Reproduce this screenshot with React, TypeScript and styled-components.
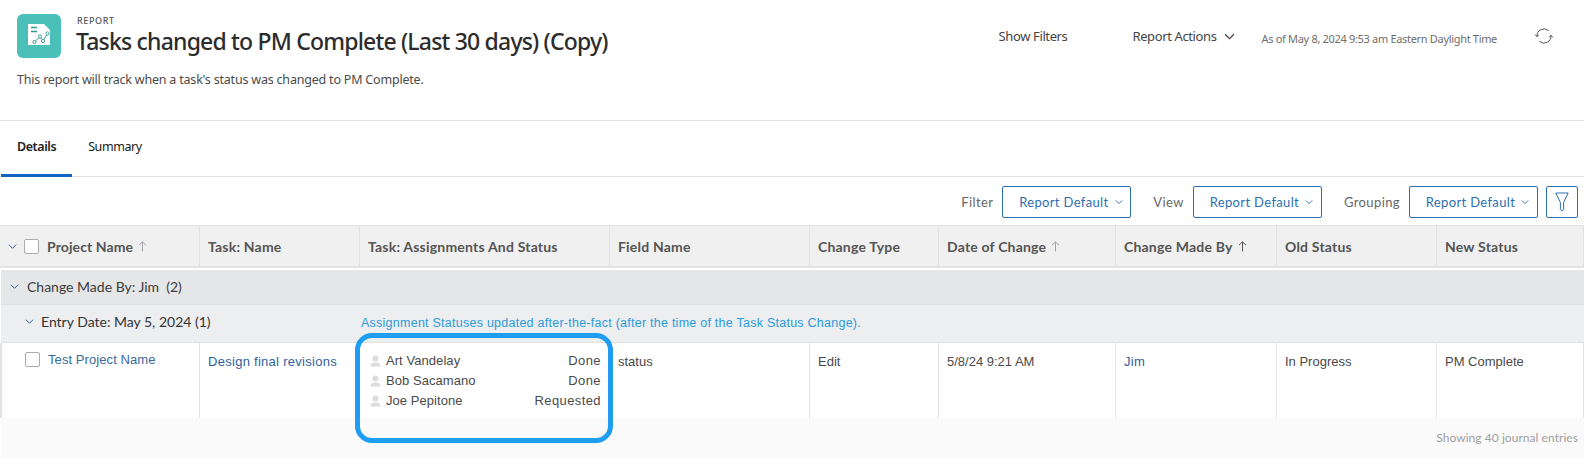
import React, { FC } from 'react';
import styled, { createGlobalStyle } from 'styled-components';

const COLUMNS = '200px 160px 250px 200px 129px 177px 161px 160px 1fr';

const GlobalStyle = createGlobalStyle`
  html, body {
    margin: 0;
    padding: 0;
    background: #fff;
  }
  body {
    font-family: 'Lato', 'Liberation Sans', sans-serif;
    color: #454545;
  }
`;

const Chevron: FC<{ size?: number; color?: string }> = ({ size = 9, color = '#2c5fa8' }) => (
  <svg width={size} height={size} viewBox="0 0 10 10" fill="none" stroke={color} strokeWidth="1.1">
    <path d="M1 3l4 4 4-4" />
  </svg>
);

const Arrow: FC<{ dark?: boolean }> = ({ dark }) => (
  <svg width="9" height="11" viewBox="0 0 9 11" fill="none" stroke={dark ? '#555' : '#a5a5a5'} strokeWidth="1">
    <path d="M4.5 10.5V1M1 4.2l3.5-3.4L8 4.2" />
  </svg>
);

const Person: FC = () => (
  <svg width="11" height="12" viewBox="0 0 11 12" fill="#dcdcdc">
    <circle cx="5.5" cy="3.4" r="3" />
    <path d="M0.5 11.5c0-2.6 1.6-4 5-4s5 1.4 5 4z" />
  </svg>
);

const ReportIcon: FC = () => (
  <svg width="44" height="44" viewBox="0 0 44 44">
    <path d="M11 10h16l6 6v15H11z" fill="#fff" />
    <path d="M14 13.5h6M14 17.5h6" stroke="#2f9d95" strokeWidth="1.4" />
    <g fill="none" stroke="#2f8f88" strokeWidth="0.9">
      <circle cx="17.5" cy="28" r="1.6" />
      <circle cx="23" cy="22.5" r="1.6" />
      <circle cx="26" cy="27" r="1.6" />
      <circle cx="30.5" cy="19.5" r="1.6" />
      <path d="M18.6 26.8l3.3-3.2M23.8 24l1.4 1.6M26.9 25.6l2.8-4.7" />
    </g>
  </svg>
);

const RefreshIcon: FC = () => (
  <svg width="20" height="20" viewBox="0 0 20 20" fill="none" stroke="#555" strokeWidth="1">
    <path d="M3 10.5A7 7 0 0 1 14.5 4.6" />
    <path d="M17 9.5A7 7 0 0 1 5.5 15.4" />
    <path d="M1.2 8.6L3 10.8l1.8-2.2M15.2 11.4L17 9.2l1.8 2.2" />
  </svg>
);

const FunnelIcon: FC = () => (
  <svg width="14" height="20" viewBox="0 0 14 20" fill="none" stroke="#2c6fb3" strokeWidth="1">
    <path d="M0.8 1h12.4L8.6 10.5v7.2c0 1-3.2 1-3.2 0v-7.2z" />
  </svg>
);

const assignments = [
  { name: 'Art Vandelay', status: 'Done' },
  { name: 'Bob Sacamano', status: 'Done' },
  { name: 'Joe Pepitone', status: 'Requested' },
];

const filters = ['Filter', 'View', 'Grouping'];

const App: FC = () => (
  <Page>
    <GlobalStyle />
    <Header>
      <TitleRow>
        <Logo>
          <ReportIcon />
        </Logo>
        <TitleBlock>
          <Eyebrow>REPORT</Eyebrow>
          <Title>Tasks changed to PM Complete (Last 30 days) (Copy)</Title>
        </TitleBlock>
        <Actions>
          <ActionLink>Show Filters</ActionLink>
          <ActionMenu>
            Report Actions <Chevron size={11} color="#444" />
          </ActionMenu>
          <AsOf>As of May 8, 2024 9:53 am Eastern Daylight Time</AsOf>
          <RefreshIcon />
        </Actions>
      </TitleRow>
      <Description>This report will track when a task's status was changed to PM Complete.</Description>
    </Header>

    <Tabs>
      <Tab $active>Details</Tab>
      <Tab>Summary</Tab>
    </Tabs>

    <Toolbar>
      {filters.map((label) => (
        <FilterGroup key={label}>
          <FilterLabel>{label}</FilterLabel>
          <SelectButton>
            Report Default <Chevron size={8} />
          </SelectButton>
        </FilterGroup>
      ))}
      <FunnelButton>
        <FunnelIcon />
      </FunnelButton>
    </Toolbar>

    <HeadRow>
      <HeadCell>
        <Chevron />
        <Checkbox />
        <ProjectHeading>Project Name</ProjectHeading> <Arrow />
      </HeadCell>
      <HeadCell>Task: Name</HeadCell>
      <HeadCell>Task: Assignments And Status</HeadCell>
      <HeadCell>Field Name</HeadCell>
      <HeadCell>Change Type</HeadCell>
      <HeadCell>
        Date of Change <Arrow />
      </HeadCell>
      <HeadCell>
        Change Made By <Arrow dark />
      </HeadCell>
      <HeadCell>Old Status</HeadCell>
      <HeadCell>New Status</HeadCell>
    </HeadRow>

    <GroupRow>
      <Chevron />
      <span>Change Made By: Jim&nbsp;&nbsp;(2)</span>
    </GroupRow>
    <SubGroupRow>
      <SubGroupLabel>
        <Chevron />
        <span>Entry Date: May 5, 2024 (1)</span>
      </SubGroupLabel>
      <Note>Assignment Statuses updated after-the-fact (after the time of the Task Status Change).</Note>
    </SubGroupRow>

    <DataRow>
      <DataCell>
        <ProjectCell>
          <Checkbox />
          <ProjectLink>Test Project Name</ProjectLink>
        </ProjectCell>
      </DataCell>
      <DataCell>
        <LinkText>Design final revisions</LinkText>
      </DataCell>
      <DataCell>
        <Assignments>
          {assignments.map((a) => (
            <Assignment key={a.name}>
              <Person />
              <AssigneeName>{a.name}</AssigneeName>
              <AssignmentStatus>{a.status}</AssignmentStatus>
            </Assignment>
          ))}
        </Assignments>
      </DataCell>
      <DataCell>status</DataCell>
      <DataCell>Edit</DataCell>
      <DataCell>5/8/24 9:21 AM</DataCell>
      <DataCell>
        <LinkText>Jim</LinkText>
      </DataCell>
      <DataCell>In Progress</DataCell>
      <DataCell>PM Complete</DataCell>
    </DataRow>

    <Footer>Showing 40 journal entries</Footer>
    <Callout />
  </Page>
);

export default App;

const Page = styled.div`
  position: relative;
  width: 1584px;
  height: 460px;
  overflow: hidden;
  background: #fff;
`;

const Header = styled.header`
  height: 121px;
  box-sizing: border-box;
  padding: 14px 30px 0 17px;
  border-bottom: 1px solid #e1e1e1;
  font-family: 'Noto Sans', sans-serif;
`;

const TitleRow = styled.div`
  display: flex;
  align-items: flex-start;
`;

const Logo = styled.div`
  width: 44px;
  height: 44px;
  border-radius: 6px;
  background: #4bc0b8;
  display: flex;
  align-items: center;
  justify-content: center;
`;

const TitleBlock = styled.div`
  margin: 1px 0 0 16px;
  flex: 1;
`;

const Eyebrow = styled.div`
  font-size: 9px;
  font-weight: 500;
  letter-spacing: 0.6px;
  line-height: 12px;
  color: #555;
`;

const Title = styled.h1`
  margin: -1px 0 0 -1px;
  font-size: 23px;
  font-weight: 500;
  line-height: 30px;
  letter-spacing: -0.81px;
  color: #2c2c2c;
`;

const Actions = styled.div`
  display: flex;
  align-items: center;
  height: 40px;
  margin-top: 2px;
  color: #444;
  font-size: 13px;
  letter-spacing: -0.38px;
`;

const ActionLink = styled.span`
  margin-right: 65px;
`;

const ActionMenu = styled.span`
  display: flex;
  align-items: center;
  gap: 7px;
  margin-right: 27px;
`;

const AsOf = styled.span`
  font-size: 11px;
  color: #6e6e6e;
  letter-spacing: -0.32px;
  margin: 4px 37px 0 0;
`;

const Description = styled.p`
  margin: 13px 0 0;
  font-size: 12.5px;
  line-height: 18px;
  letter-spacing: -0.2px;
  color: #4b4b4b;
`;

const Tabs = styled.nav`
  display: flex;
  height: 56px;
  box-sizing: border-box;
  padding-left: 1px;
  border-bottom: 1px solid #e1e1e1;
  font-family: 'Noto Sans', sans-serif;
`;

const Tab = styled.div<{ $active?: boolean }>`
  height: 56px;
  box-sizing: border-box;
  display: flex;
  align-items: center;
  padding: ${(p) => (p.$active ? '0 16px 2px' : '0 0 5px 16px')};
  font-size: 12.5px;
  letter-spacing: -0.42px;
  font-weight: ${(p) => (p.$active ? 600 : 400)};
  color: #222;
  border-bottom: ${(p) => (p.$active ? '3px solid #1264c4' : 'none')};
`;

const Toolbar = styled.div`
  display: flex;
  justify-content: flex-end;
  align-items: center;
  height: 47px;
  box-sizing: border-box;
  padding: 2px 6px 0 0;
  gap: 8px;
  font-family: 'Lato', sans-serif;
`;

const FilterGroup = styled.div`
  display: flex;
  align-items: center;
  gap: 9px;
  margin-left: 14px;
`;

const FilterLabel = styled.span`
  font-size: 13px;
  letter-spacing: 0.4px;
  color: #666;
`;

const SelectButton = styled.div`
  width: 129px;
  height: 32px;
  box-sizing: border-box;
  padding-left: 8px;
  border: 1px solid #2c6fb3;
  border-radius: 2px;
  display: flex;
  align-items: center;
  justify-content: center;
  gap: 6px;
  font-size: 13px;
  letter-spacing: 0.35px;
  color: #2c6fb3;
`;

const FunnelButton = styled.div`
  width: 32px;
  height: 32px;
  box-sizing: border-box;
  border: 1px solid #2c6fb3;
  border-radius: 2px;
  display: flex;
  align-items: center;
  justify-content: center;
`;

const HeadRow = styled.div`
  display: grid;
  grid-template-columns: ${COLUMNS};
  height: 43px;
  box-sizing: border-box;
  margin-top: 1px;
  background: #f0f0f0;
  border-top: 1px solid #e3e3e3;
  border-bottom: 2px solid #e3e3e3;
`;

const HeadCell = styled.div`
  display: flex;
  align-items: center;
  gap: 5px;
  padding-left: 8px;
  font-size: 14px;
  letter-spacing: 0.2px;
  font-weight: 700;
  color: #555;
  border-right: 1px solid #e3e3e3;
  white-space: nowrap;
`;

const ProjectHeading = styled.span`
  margin-left: 1px;
  letter-spacing: 0.1px;
`;

const Checkbox = styled.span`
  width: 13px;
  height: 13px;
  border: 1px solid #ababab;
  border-radius: 2px;
  background: #fff;
  margin: 0 2px 0 2px;
  flex: none;
`;

const GroupRow = styled.div`
  display: flex;
  align-items: center;
  gap: 8px;
  height: 34px;
  margin: 2px 0 0 1px;
  padding: 0 0 1px 9px;
  box-sizing: border-box;
  background: #e5e6e8;
  font-size: 14px;
  color: #3c3c3c;
`;

const SubGroupRow = styled.div`
  display: grid;
  grid-template-columns: 359px 1fr;
  align-items: center;
  height: 39px;
  box-sizing: border-box;
  margin-left: 1px;
  padding-bottom: 4px;
  background: #eceef0;
  border-top: 1px solid #e0e0e0;
  border-bottom: 1px solid #e0e0e0;
  font-size: 14px;
  color: #333;
`;

const SubGroupLabel = styled.div`
  display: flex;
  align-items: center;
  gap: 7px;
  padding-left: 24px;
`;

const Note = styled.div`
  color: #2b9bdc;
  font-family: 'Liberation Sans', sans-serif;
  font-size: 12.5px;
  letter-spacing: 0.25px;
  padding: 3px 0 0 1px;
`;

const DataRow = styled.div`
  display: grid;
  grid-template-columns: ${COLUMNS};
  height: 75px;
  box-shadow: inset 2px 0 #e3e3e3;
`;

const DataCell = styled.div`
  box-sizing: border-box;
  padding: 11px 8px 0;
  font-family: 'Liberation Sans', sans-serif;
  font-size: 13px;
  color: #4a4a4a;
  border-right: 1px solid #e3e3e3;
  white-space: nowrap;
`;

const ProjectCell = styled.div`
  display: flex;
  align-items: center;
  gap: 6px;
  margin: -2px 0 0 15px;
`;

const ProjectLink = styled.span`
  color: #3a6a9e;
  letter-spacing: 0.08px;
`;

const LinkText = styled.span`
  color: #2f5f9e;
  letter-spacing: 0.28px;
`;

const Assignments = styled.div`
  display: flex;
  flex-direction: column;
  gap: 5px;
  margin: -1px 0 0 2px;
`;

const Assignment = styled.div`
  display: flex;
  align-items: center;
  gap: 5px;
  line-height: 15px;
`;

const AssigneeName = styled.span`
  flex: 1;
  letter-spacing: 0.06px;
`;

const AssignmentStatus = styled.span`
  letter-spacing: 0.4px;
`;

const Footer = styled.div`
  height: 40px;
  margin-left: 1px;
  background: #fafafa;
  display: flex;
  align-items: center;
  justify-content: flex-end;
  padding: 0 6px 2px 0;
  box-sizing: border-box;
  font-size: 12px;
  letter-spacing: 0.05px;
  color: #a0a0a0;
`;

const Callout = styled.div`
  position: absolute;
  left: 355px;
  top: 333px;
  width: 258px;
  height: 110px;
  box-sizing: border-box;
  border: 5px solid #1f9df0;
  border-radius: 17px;
`;
